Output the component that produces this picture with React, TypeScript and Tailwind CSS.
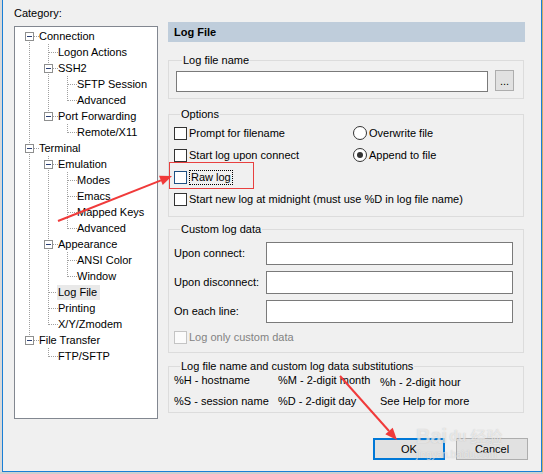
import React from 'react';

type TNode = { label: string; children?: TNode[]; selected?: boolean };

const TREE: TNode[] = [
  {
    label: 'Connection',
    children: [
      { label: 'Logon Actions' },
      { label: 'SSH2', children: [{ label: 'SFTP Session' }, { label: 'Advanced' }] },
      { label: 'Port Forwarding', children: [{ label: 'Remote/X11' }] },
    ],
  },
  {
    label: 'Terminal',
    children: [
      {
        label: 'Emulation',
        children: [{ label: 'Modes' }, { label: 'Emacs' }, { label: 'Mapped Keys' }, { label: 'Advanced' }],
      },
      { label: 'Appearance', children: [{ label: 'ANSI Color' }, { label: 'Window' }] },
      { label: 'Log File', selected: true },
      { label: 'Printing' },
      { label: 'X/Y/Zmodem' },
    ],
  },
  { label: 'File Transfer', children: [{ label: 'FTP/SFTP' }] },
];

type Row = {
  label: string;
  depth: number;
  guides: boolean[];
  first: boolean;
  last: boolean;
  hasChildren: boolean;
  selected?: boolean;
};

function flatten(nodes: TNode[], depth: number, guides: boolean[], out: Row[]): Row[] {
  nodes.forEach((n, i) => {
    const last = i === nodes.length - 1;
    out.push({
      label: n.label,
      depth,
      guides,
      first: depth === 0 && i === 0,
      last,
      hasChildren: !!n.children,
      selected: n.selected,
    });
    if (n.children) flatten(n.children, depth + 1, [...guides, !last], out);
  });
  return out;
}

const ROWS = flatten(TREE, 0, [], []);

const dot = {
  stroke: '#a0a0a0',
  strokeWidth: 1,
  strokeDasharray: '1 1',
  shapeRendering: 'crispEdges' as const,
};

function GuideCell({ on }: { on: boolean }) {
  return (
    <svg width={19} height={16} className="shrink-0">
      {on && <line x1={9.5} y1={0} x2={9.5} y2={16} {...dot} />}
    </svg>
  );
}

function ConnectorCell({ first, last, hasChildren }: { first: boolean; last: boolean; hasChildren: boolean }) {
  const y1 = first ? 8 : 0;
  const y2 = last ? 9 : 16;
  return (
    <svg width={19} height={16} className="shrink-0">
      <line x1={9.5} y1={y1} x2={9.5} y2={y2} {...dot} />
      <line x1={10} y1={8.5} x2={19} y2={8.5} {...dot} />
      {hasChildren && (
        <>
          <rect x={5.5} y={4.5} width={8} height={8} fill="#ffffff" stroke="#8e8f8f" shapeRendering="crispEdges" />
          <line x1={7} y1={8.5} x2={12} y2={8.5} stroke="#2a3f74" shapeRendering="crispEdges" />
        </>
      )}
    </svg>
  );
}

function Checkbox({ focused, disabled }: { focused?: boolean; disabled?: boolean }) {
  const cls = disabled
    ? 'border-[#c4c4c4] bg-[#fbfbfb]'
    : focused
    ? 'border-[#1d4f82] bg-white'
    : 'border-[#333333] bg-white';
  return <span className={`inline-block w-[13px] h-[13px] shrink-0 border ${cls}`} />;
}

function Radio({ checked }: { checked?: boolean }) {
  return (
    <span className="flex items-center justify-center w-[14px] h-[14px] shrink-0 rounded-full border border-[#333333] bg-white">
      {checked && <span className="block w-[6px] h-[6px] rounded-full bg-[#333333]" />}
    </span>
  );
}

function Group({ title, className, children }: { title: string; className: string; children?: React.ReactNode }) {
  return (
    <fieldset className={`border border-[#dcdcdc] w-[356px] ${className}`}>
      <legend className="ml-[6px] px-[1px] leading-[16px] whitespace-nowrap">{title}</legend>
      {children}
    </fieldset>
  );
}

export default function App() {
  return (
    <div
      className="relative flex w-[543px] h-[474px] overflow-hidden bg-[#cfcfcf] text-[11px] text-black"
      style={{ fontFamily: '"Liberation Sans", Arial, sans-serif' }}
    >
      <div className="w-[2px] h-[472px] bg-[#d9d9d9]" />
      <div className="flex w-[540px] h-[472px] border-l border-r border-b border-[#1a7fd6] bg-[#f0f0f0]">
        {/* left column */}
        <div className="flex flex-col pl-[11px]">
          <div className="mt-[5px] leading-[16px]">Category:</div>
          <div className="mt-[5px] w-[144px] h-[393px] border border-[#828790] bg-white pt-[1px] pl-[5px]">
            {ROWS.map((r, i) => (
              <div key={i} className="flex h-[16px] items-center">
                {r.guides.map((g, k) => (
                  <GuideCell key={k} on={g} />
                ))}
                <ConnectorCell first={r.first} last={r.last} hasChildren={r.hasChildren} />
                <span
                  className={`leading-[15px] whitespace-nowrap ${r.selected ? 'bg-[#e9e9e9] -ml-[1px] pl-[1px] pr-[3px]' : ''}`}
                >
                  {r.label}
                </span>
              </div>
            ))}
          </div>
        </div>

        {/* right column */}
        <div className="flex flex-col ml-[10px] pt-[22px] w-[361px]">
          <div className="w-[357px] h-[20px] bg-[#bfcddb] pl-[6px] font-bold leading-[20px]">Log File</div>

          <Group title="Log file name" className="mt-[10px] h-[47px] px-[7px]">
            <div className="flex items-start mt-[3px]">
              <div className="w-[312px] h-[21px] border border-[#7a7a7a] bg-white" />
              <div className="ml-[7px] -mt-[1px] flex items-center justify-center w-[19px] h-[21px] border border-[#adadad] bg-[#e1e1e1] leading-[14px]">
                ...
              </div>
            </div>
          </Group>

          <Group title="Options" className="mt-[7px] h-[111px] px-[5px]">
            <div className="flex h-[22px] items-center">
              <div className="flex items-center w-[179px]">
                <Checkbox />
                <span className="ml-[2px]">Prompt for filename</span>
              </div>
              <Radio />
              <span className="ml-[2px]">Overwrite file</span>
            </div>
            <div className="flex h-[22px] items-center">
              <div className="flex items-center w-[179px]">
                <Checkbox />
                <span className="ml-[2px]">Start log upon connect</span>
              </div>
              <Radio checked />
              <span className="ml-[2px]">Append to file</span>
            </div>
            <div className="flex h-[22px] items-center">
              <Checkbox focused />
              <span className="ml-[2px] border border-dotted border-black px-[1px] leading-[13px]">Raw log</span>
            </div>
            <div className="flex h-[22px] items-center">
              <Checkbox />
              <span className="ml-[2px] whitespace-nowrap">
                Start new log at midnight (must use %D in log file name)
              </span>
            </div>
          </Group>

          <Group title="Custom log data" className="mt-[4px] h-[132px] px-[5px]">
            <div className="flex items-center mt-[5px]">
              <span className="w-[92px] whitespace-nowrap">Upon connect:</span>
              <div className="w-[247px] h-[23px] border border-[#7a7a7a] bg-white" />
            </div>
            <div className="flex items-center mt-[6px]">
              <span className="w-[92px] whitespace-nowrap">Upon disconnect:</span>
              <div className="w-[247px] h-[23px] border border-[#7a7a7a] bg-white" />
            </div>
            <div className="flex items-center mt-[6px]">
              <span className="w-[92px] whitespace-nowrap">On each line:</span>
              <div className="w-[247px] h-[23px] border border-[#7a7a7a] bg-white" />
            </div>
            <div className="flex items-center h-[22px] mt-[3px]">
              <Checkbox disabled />
              <span className="ml-[2px] text-[#838383]">Log only custom data</span>
            </div>
          </Group>

          <Group title="Log file name and custom log data substitutions" className="mt-[5px] h-[55px] px-[5px]">
            <div className="flex h-[16px] items-center -mt-[2px] leading-[16px] whitespace-nowrap">
              <span className="w-[104px]">%H - hostname</span>
              <span className="w-[102px]">%M - 2-digit month</span>
              <span className="mt-[3px]">%h - 2-digit hour</span>
            </div>
            <div className="flex h-[16px] items-center mt-[5px] leading-[16px] whitespace-nowrap">
              <span className="w-[104px]">%S - session name</span>
              <span className="w-[102px]">%D - 2-digit day</span>
              <span>See Help for more</span>
            </div>
          </Group>

          <div className="flex mt-[25px]">
            <div className="ml-[205px] flex items-center justify-center w-[72px] h-[22px] border-2 border-[#0078d7] bg-[#e1e1e1]">
              OK
            </div>
            <div className="ml-[11px] flex items-center justify-center w-[72px] h-[22px] border border-[#adadad] bg-[#e1e1e1]">
              Cancel
            </div>
          </div>
        </div>
      </div>
      <div className="w-[1px] h-[472px] bg-[#c9ad6a]" />

      {/* watermark */}
      <div className="pointer-events-none absolute left-[416px] top-[426px] flex flex-col text-white/60 [text-shadow:0_0_1px_rgba(140,140,140,0.5)]">
        <div className="flex items-end gap-[2px] leading-[20px]">
          <span className="text-[20px] font-bold">Bai</span>
          <span className="text-[14px] font-bold">du</span>
          <span className="text-[16px] ml-[2px]" style={{ fontFamily: '"Noto Sans CJK SC", sans-serif' }}>
            经验
          </span>
        </div>
        <span className="text-[10px] leading-[11px] mt-[3px]">jingyan.baidu.com</span>
      </div>

      {/* annotations */}
      <svg className="pointer-events-none absolute left-0 top-0" width={543} height={474}>
        <rect x={169.5} y={162.5} width={84} height={26} fill="none" stroke="#e8403f" strokeWidth={1} />
        <line x1={58} y1={221} x2={161} y2={180.4} stroke="#f03a3a" strokeWidth={2} />
        <polygon points="172,176 162.7,185 159,175.8" fill="#f03a3a" />
        <line x1={340} y1={376} x2={389} y2={431} stroke="#f03a3a" strokeWidth={2} />
        <polygon points="397,440 385.3,434.3 392.7,427.7" fill="#f03a3a" />
      </svg>
    </div>
  );
}
